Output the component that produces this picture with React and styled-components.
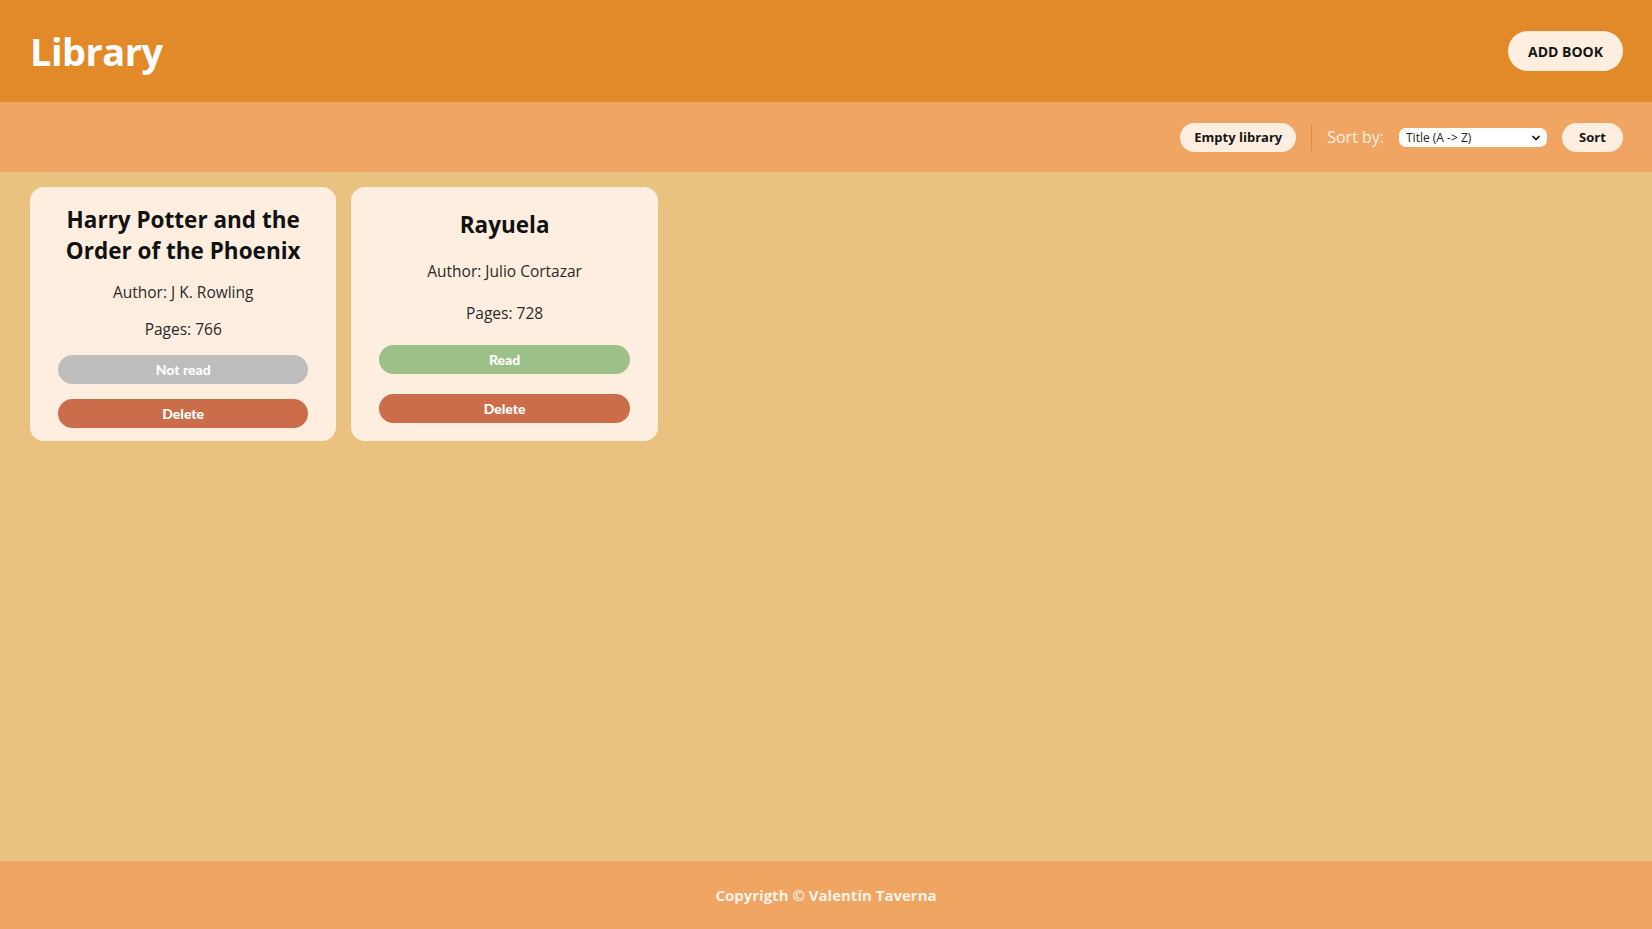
import React from 'react';
import styled, { createGlobalStyle } from 'styled-components';
import { ChevronDown } from 'lucide-react';

const Global = createGlobalStyle`
  html, body { margin: 0; padding: 0; }
  body { font-family: "Open Sans", "Noto Sans", sans-serif; background: #e8c27e; color: #1d1d1d; }
  #root { min-height: 100vh; display: flex; flex-direction: column; }
`;

const books = [
  { title: 'Harry Potter and the Order of the Phoenix', author: 'J K. Rowling', pages: 766, read: false },
  { title: 'Rayuela', author: 'Julio Cortazar', pages: 728, read: true },
];

const Header = styled.header`
  height: 102px; flex-shrink: 0;
  display: flex; align-items: center; justify-content: space-between;
  padding: 0 29px 0 30px;
  background: #e28a2a;
`;
const Title = styled.h1`
  margin: 0; color: #fff; font-size: 38px; font-weight: 700; letter-spacing: -0.5px;
`;
const PillButton = styled.button`
  border: none; border-radius: 999px; cursor: pointer;
  background: #fdeedf; color: #151515;
  font-family: "Open Sans", sans-serif; font-weight: 700;
  font-size: ${({ $big }) => ($big ? '14px' : '13px')};
  height: ${({ $big }) => ($big ? '40px' : '29px')};
  padding: 0 ${({ $big }) => ($big ? '20px' : '14px')};
  min-width: ${({ $minW }) => $minW || 0}px;
`;
const Toolbar = styled.div`
  height: 70px; flex-shrink: 0;
  display: flex; align-items: center; justify-content: flex-end; gap: 15px;
  padding: 0 29px;
  background: #f0a562;
`;
const Divider = styled.span`
  width: 1px; height: 27px; background: #de8d45;
`;
const Label = styled.label`
  color: #fdf3e8; font-size: 16px;
`;
const SelectWrap = styled.div`
  position: relative; width: 148px; height: 19px;
`;
const Select = styled.select`
  display: block; appearance: none; width: 100%; height: 100%;
  border: none; border-radius: 7px; background: #fff;
  padding: 0 20px 0 7px;
  font-family: "Open Sans", sans-serif; font-size: 12px; color: #222;
`;
const Chevron = styled(ChevronDown)`
  position: absolute; right: 5px; top: 4px; pointer-events: none;
`;
const Main = styled.main`
  flex: 1;
  display: grid; grid-template-columns: repeat(auto-fill, minmax(300px, 1fr));
  align-content: start; gap: 15px;
  padding: 15px 30px;
`;
const Card = styled.article`
  background: #fdeedf; border-radius: 14px;
  display: flex; flex-direction: column; justify-content: space-evenly; gap: 15px;
  padding: 17px 28px 13px; text-align: center;
`;
const BookTitle = styled.h2`
  margin: 0; font-size: 22.5px; line-height: 31px; font-weight: 700; color: #111;
`;
const Info = styled.p`
  margin: 0; font-size: 15.5px; line-height: 22px; color: #2a2a2a;
`;
const CardButton = styled.button`
  border: none; border-radius: 999px; height: 29px; width: 100%;
  font-family: Lato, sans-serif; font-weight: 900; font-size: 14px; color: #fff;
  background: ${({ $tone }) => ({ gray: '#bdbdbd', green: '#9dbf88', red: '#cb6d4b' }[$tone])};
`;
const Footer = styled.footer`
  height: 68px; flex-shrink: 0;
  display: flex; align-items: center; justify-content: center;
  background: #f0a562; color: #fdf3e8; font-weight: 700; font-size: 15px;
`;

export default function App() {
  return (
    <>
      <Global />
      <Header>
        <Title>Library</Title>
        <PillButton $big>ADD BOOK</PillButton>
      </Header>
      <Toolbar>
        <PillButton>Empty library</PillButton>
        <Divider />
        <Label htmlFor="sort">Sort by:</Label>
        <SelectWrap>
          <Select id="sort" defaultValue="title-asc">
            <option value="title-asc">Title (A -&gt; Z)</option>
            <option value="title-desc">Title (Z -&gt; A)</option>
          </Select>
          <Chevron size={12} strokeWidth={3.5} color="#111" />
        </SelectWrap>
        <PillButton $minW={61}>Sort</PillButton>
      </Toolbar>
      <Main>
        {books.map((b) => (
          <Card key={b.title}>
            <BookTitle>{b.title}</BookTitle>
            <Info>Author: {b.author}</Info>
            <Info>Pages: {b.pages}</Info>
            <CardButton $tone={b.read ? 'green' : 'gray'}>{b.read ? 'Read' : 'Not read'}</CardButton>
            <CardButton $tone="red">Delete</CardButton>
          </Card>
        ))}
      </Main>
      <Footer>Copyrigth © Valentín Taverna</Footer>
    </>
  );
}
